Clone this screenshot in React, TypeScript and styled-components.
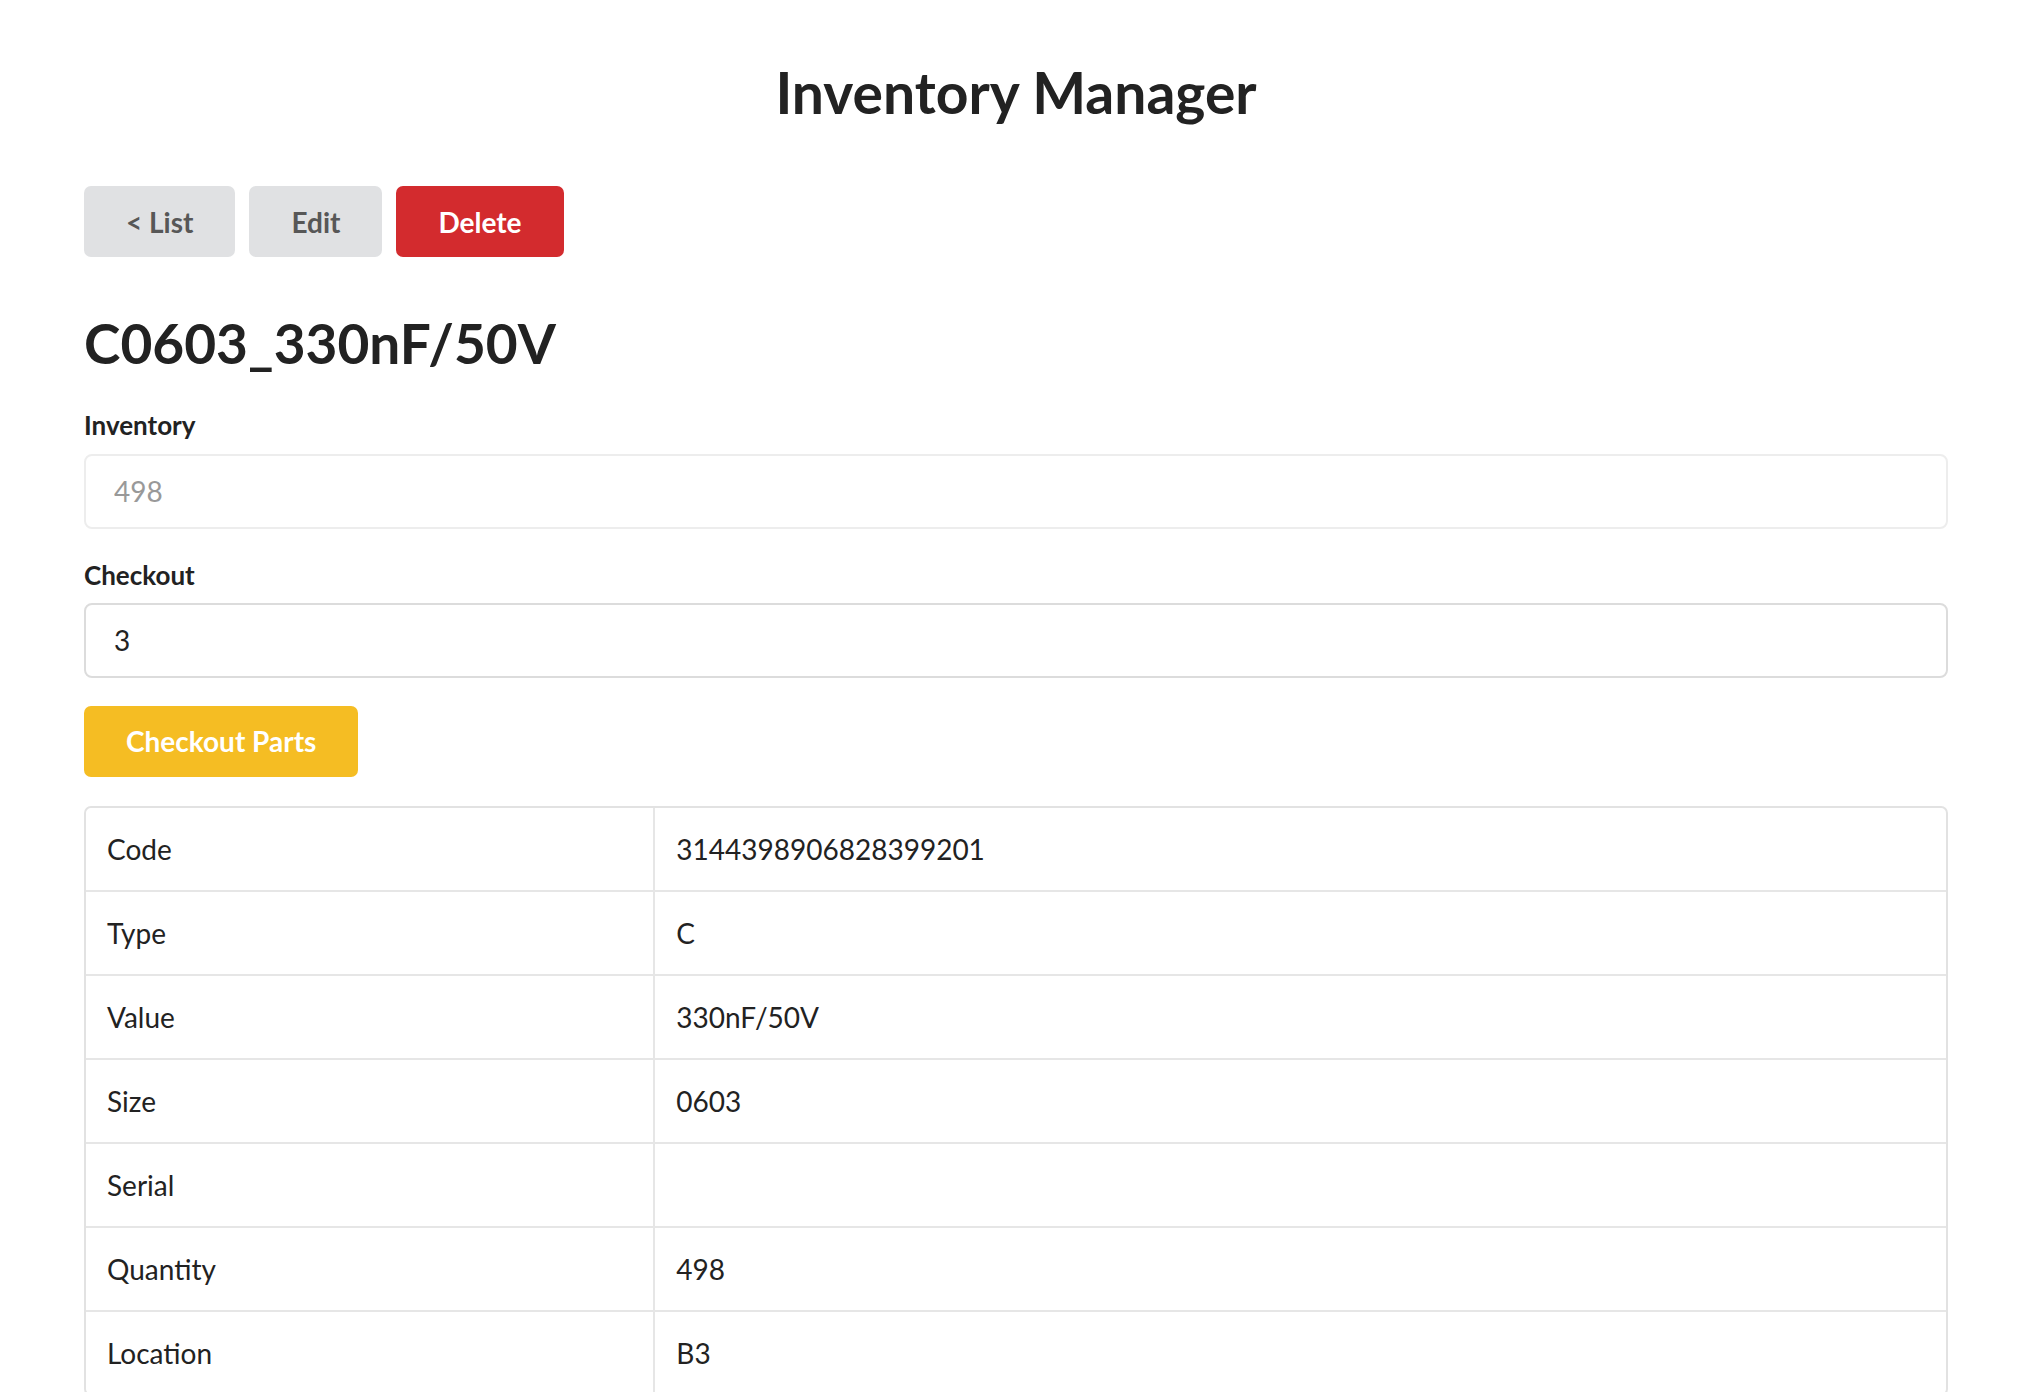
import React, { useState } from 'react'
import styled, { createGlobalStyle } from 'styled-components'

const GlobalStyle = createGlobalStyle`
  body {
    margin: 0;
    background: #fff;
    font-family: Lato, "Noto Sans", "Liberation Sans", sans-serif;
    color: #222;
  }
`

const Page = styled.div`
  padding: 58px 82px 0 84px;
`

const Title = styled.h1`
  margin: 0;
  font-size: 57px;
  line-height: 1.2;
  font-weight: 700;
  text-align: center;
`

const Toolbar = styled.div`
  display: flex;
  gap: 14px;
  margin-top: 60px;
`

const Button = styled.button<{ variant?: 'default' | 'danger' | 'warning' }>`
  height: 71px;
  padding: 0 42px;
  border: none;
  border-radius: 7px;
  font-family: inherit;
  font-size: 28px;
  font-weight: 700;
  cursor: pointer;
  background: ${p => p.variant === 'danger' ? '#d32b2e' : p.variant === 'warning' ? '#f5bd23' : '#e0e1e3'};
  color: ${p => p.variant === 'danger' || p.variant === 'warning' ? '#fff' : '#575757'};
`

const PartName = styled.h2`
  margin: 53px 0 0;
  font-size: 55px;
  line-height: 1.2;
  font-weight: 700;
`

const Field = styled.div`
  display: flex;
  flex-direction: column;
  gap: 12px;
  margin-top: 34px;

  & + & {
    margin-top: 31px;
  }
`

const Label = styled.label`
  font-size: 26px;
  font-weight: 700;
  line-height: 1.2;
`

const Input = styled.input`
  box-sizing: border-box;
  width: 100%;
  height: 75px;
  padding: 0 28px;
  border: 2px solid #dcdcdc;
  border-radius: 8px;
  background: #fff;
  font-family: inherit;
  font-size: 28px;
  color: #222;
  outline: none;

  &:disabled {
    border-color: #ededed;
    color: #999;
  }
`

const SubmitRow = styled.div`
  margin-top: 28px;
`

const DetailTable = styled.table`
  width: 100%;
  margin-top: 29px;
  border-collapse: separate;
  border-spacing: 0;
  border: 2px solid #e2e2e2;
  border-radius: 7px;
  font-size: 28px;
`

const Cell = styled.td<{ first?: boolean }>`
  height: 82px;
  padding: 0 21px;
  border-top: 2px solid #e6e6e6;
  border-left: ${p => p.first ? 'none' : '2px solid #e6e6e6'};
  width: ${p => p.first ? '30.5%' : 'auto'};
  vertical-align: middle;

  tr:first-child > & {
    border-top: none;
  }
`

const details: Array<[string, string]> = [
  ['Code', '3144398906828399201'],
  ['Type', 'C'],
  ['Value', '330nF/50V'],
  ['Size', '0603'],
  ['Serial', ''],
  ['Quantity', '498'],
  ['Location', 'B3'],
]

export default function App() {
  const [checkout, setCheckout] = useState('3')

  return (
    <Page>
      <GlobalStyle />
      <Title>Inventory Manager</Title>

      <Toolbar>
        <Button>&lt; List</Button>
        <Button>Edit</Button>
        <Button variant="danger">Delete</Button>
      </Toolbar>

      <PartName>C0603_330nF/50V</PartName>

      <Field>
        <Label>Inventory</Label>
        <Input value="498" disabled readOnly />
      </Field>
      <Field>
        <Label>Checkout</Label>
        <Input value={checkout} onChange={e => setCheckout(e.target.value)} />
      </Field>

      <SubmitRow>
        <Button variant="warning">Checkout Parts</Button>
      </SubmitRow>

      <DetailTable>
        <tbody>
          {details.map(([key, value]) => (
            <tr key={key}>
              <Cell first>{key}</Cell>
              <Cell>{value}</Cell>
            </tr>
          ))}
        </tbody>
      </DetailTable>
    </Page>
  )
}
